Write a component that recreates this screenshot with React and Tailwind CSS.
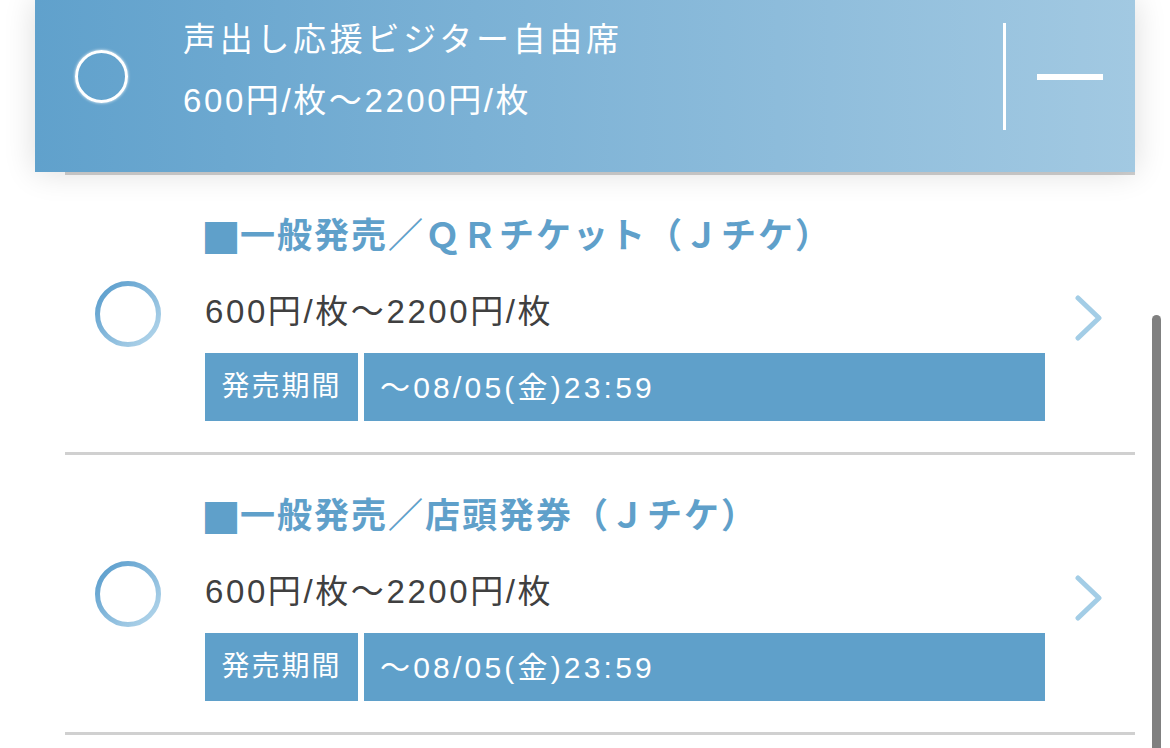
import React from 'react';

const FONT = { fontFamily: '"Liberation Sans", "Noto Sans CJK JP", sans-serif' };

const tickets = [
  { id: 'qr', title: '一般発売／ＱＲチケット（Ｊチケ）' },
  { id: 'store', title: '一般発売／店頭発券（Ｊチケ）' },
];

const RingIcon = ({ id }) => (
  <svg width="66" height="66" viewBox="0 0 66 66">
    <defs>
      <linearGradient id={`ring-${id}`} x1="0" y1="0" x2="1" y2="1">
        <stop offset="0%" stopColor="#559acb" />
        <stop offset="100%" stopColor="#b7d8ec" />
      </linearGradient>
    </defs>
    <circle cx="33" cy="33" r="30.5" fill="none" stroke={`url(#ring-${id})`} strokeWidth="5" />
  </svg>
);

const Chevron = () => (
  <svg width="28" height="46" viewBox="0 0 28 46">
    <path d="M3 3 L24 23 L3 43" fill="none" stroke="#a3cde6" strokeWidth="5" strokeLinecap="round" strokeLinejoin="round" />
  </svg>
);

const TicketRow = ({ ticket }) => (
  <div className="flex border-b-[3px] border-[#d0d0d0]">
    <div className="w-[140px] shrink-0 pl-[30px] pt-[106px]">
      <RingIcon id={ticket.id} />
    </div>
    <div className="w-[840px] pt-[41px] pb-[31px]">
      <p className="flex h-[40px] items-center text-[35px] font-bold leading-[40px] tracking-[2px] text-[#5fa0ca]">
        <span className="mr-[3px] flex h-[40px] w-[32px] items-center justify-center text-[40px] font-normal leading-none tracking-normal" style={{ fontFamily: '"Noto Sans CJK JP", sans-serif' }}>■</span>
        {ticket.title}
      </p>
      <p className="mt-[36px] text-[33px] leading-[40px] tracking-[2.6px] text-[#404040]">600円/枚〜2200円/枚</p>
      <div className="mt-[21px] flex h-[68px] gap-[6px]">
        <div className="flex w-[153px] items-center justify-center bg-[#5fa0ca] text-[28px] tracking-[2px] text-white">発売期間</div>
        <div className="flex flex-1 items-center bg-[#5fa0ca] pl-[16px] text-[30px] tracking-[3.2px] text-white">〜08/05(金)23:59</div>
      </div>
    </div>
    <div className="flex flex-1 items-start justify-center pt-[120px] pr-[2px]">
      <Chevron />
    </div>
  </div>
);

export default function App() {
  return (
    <div className="relative h-[748px] w-[1170px] overflow-hidden bg-white" style={FONT}>
      <div className="ml-[35px] w-[1100px]">
        <div className="relative z-10 flex h-[172px] items-start bg-gradient-to-r from-[#60a1cc] to-[#a2c9e2] shadow-[0_0_30px_rgba(0,0,0,0.14)]">
          <div className="ml-[40px] mt-[50px] h-[53px] w-[53px] shrink-0 rounded-full border-[3.5px] border-white shadow-[0_0_3px_rgba(255,255,255,0.9)]" />
          <div className="ml-[55px] mt-[18px] flex-1 text-white">
            <p className="text-[33px] leading-[44px] tracking-[3.7px]">声出し応援ビジター自由席</p>
            <p className="mt-[17px] text-[33px] leading-[44px] tracking-[2.6px]">600円/枚〜2200円/枚</p>
          </div>
          <div className="mt-[23px] h-[107px] w-[3px] bg-white" />
          <div className="ml-[31px] mr-[32px] mt-[74px] h-[6px] w-[66px] bg-white" />
        </div>
        <div className="ml-[30px] border-t-[3px] border-[#d0d0d0] bg-white">
          {tickets.map(t => <TicketRow key={t.id} ticket={t} />)}
        </div>
      </div>
      <div className="absolute left-[1152px] top-[315px] h-[460px] w-[9px] rounded-full bg-[#808080]" />
    </div>
  );
}
